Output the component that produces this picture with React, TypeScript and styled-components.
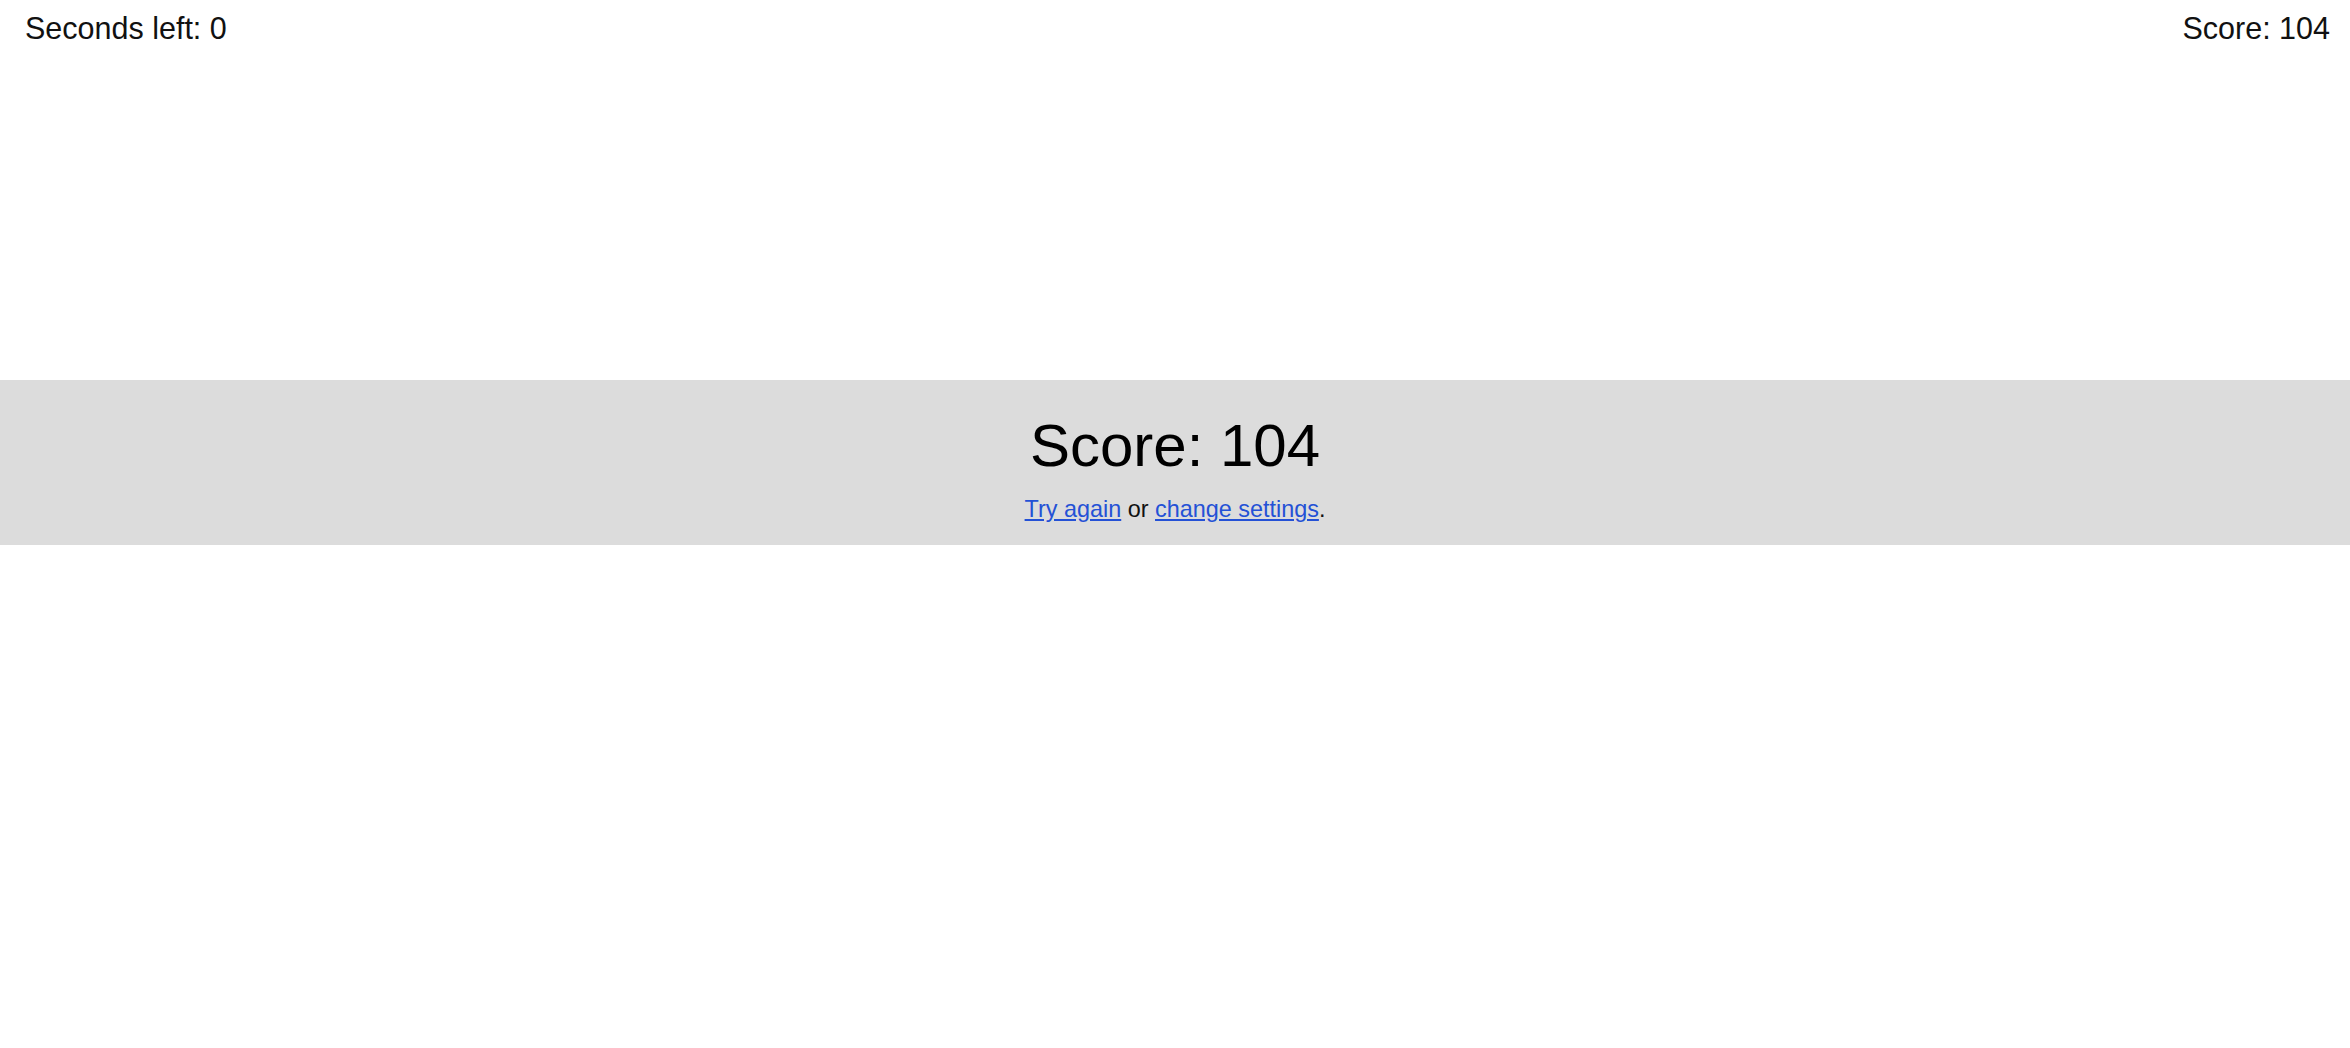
import React from "react";
import styled, { createGlobalStyle } from "styled-components";

const Global = createGlobalStyle`
  html, body { margin: 0; padding: 0; background: #ffffff; }
  body { font-family: "Liberation Sans", Arial, Helvetica, sans-serif; color: #000; }
`;

const Page = styled.div`
  display: flex;
  flex-direction: column;
  width: 100%;
  min-height: 1048px;
  background: #ffffff;
`;

const TopBar = styled.div`
  display: flex;
  justify-content: space-between;
  align-items: flex-start;
  padding: 11px 20px 0 25px;
  height: 45px;
  box-sizing: border-box;
`;

const Stat = styled.div`
  font-size: 30.5px;
  line-height: 34.5px;
  color: #111;
`;

const ResultBand = styled.section`
  margin-top: 335px;
  height: 165px;
  box-sizing: border-box;
  background: #dcdcdc;
  display: flex;
  flex-direction: column;
  align-items: center;
  padding-top: 31px;
`;

const BigScore = styled.h1`
  margin: 0;
  font-weight: 400;
  font-size: 60px;
  line-height: 69px;
  color: #000;
`;

const Actions = styled.p`
  margin: 16px 0 0;
  font-size: 23.4px;
  line-height: 27px;
  color: #111;
`;

const Link = styled.a`
  color: #2451d6;
  text-decoration: underline;
  cursor: pointer;
`;

export default function App() {
  return (
    <Page>
      <Global />
      <TopBar>
        <Stat>Seconds left: 0</Stat>
        <Stat>Score: 104</Stat>
      </TopBar>
      <ResultBand>
        <BigScore>Score: 104</BigScore>
        <Actions>
          <Link href="#">Try again</Link> or <Link href="#">change settings</Link>.
        </Actions>
      </ResultBand>
    </Page>
  );
}
